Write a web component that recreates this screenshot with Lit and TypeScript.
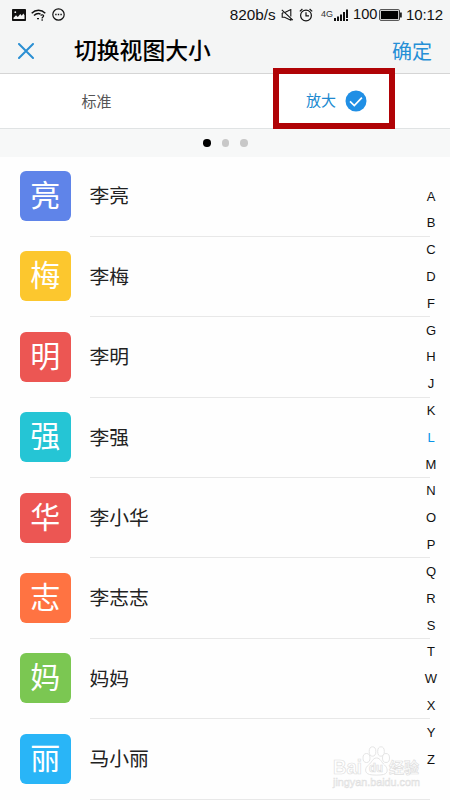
import { LitElement, html, css } from "lit";
import { customElement, property, state } from "lit/decorators.js";
import { classMap } from "lit/directives/class-map.js";

interface Contact {
  name: string;
  mark: string;
  color: string;
}

const CONTACTS: Contact[] = [
  { name: "李亮", mark: "亮", color: "#5f84e9" },
  { name: "李梅", mark: "梅", color: "#fcc72e" },
  { name: "李明", mark: "明", color: "#ec5653" },
  { name: "李强", mark: "强", color: "#25c5d5" },
  { name: "李小华", mark: "华", color: "#ec5653" },
  { name: "李志志", mark: "志", color: "#ff7342" },
  { name: "妈妈", mark: "妈", color: "#7bc752" },
  { name: "马小丽", mark: "丽", color: "#29b5f7" },
];

const LETTERS = "ABCDFGHJKLMNOPQRSTWXYZ".split("");

@customElement("status-bar")
class StatusBar extends LitElement {
  static styles = css`
    :host {
      display: flex;
      align-items: center;
      box-sizing: border-box;
      height: 29px;
      padding: 0 7px 0 12px;
      font: 15px/29px "Liberation Sans", Arial, sans-serif;
      color: #111;
    }
    svg { display: block; flex: none; }
    .wifi { margin-left: 5px; }
    .more { margin-left: 6px; }
    .rate { margin-left: auto; font-size: 15.3px; }
    .mute { margin-left: 5.5px; }
    .alarm { margin-left: 5px; }
    .net { margin-left: 8px; font-size: 9px; width: 12.5px; color: #333; }
    .level { margin-left: 0.5px; }
    .charge { margin-left: 5px; font-size: 14.6px; }
    .battery { margin-left: 2px; }
    .time { margin-left: 3.5px; letter-spacing: -0.1px; }
  `;
  render() {
    return html`
      <svg width="14" height="12" viewBox="0 0 14 12">
        <rect width="14" height="12" rx="0.8" fill="#111" />
        <path d="M1.5 10V8.800L4 6.300l1.800 1.600L8.300 5l1.500 1.800L11.300 4.500l1.200 1.800V10z" fill="#f4f5f5" />
        <circle cx="3.300" cy="3.200" r=".9" fill="#f4f5f5" />
      </svg>
      <svg class="wifi" width="15" height="12" viewBox="0 0 15 12" fill="none" stroke="#111" stroke-width="1.4">
        <path d="M.7 4.200C4.500 .3 10.500 .3 14.300 4.200M3 6.600C5 4.600 7.500 4.200 9.500 5" />
        <path d="M9.800 6.700c.3-1.300 3-1.200 2.800.3-.1 1.100-1.500 1.100-1.500 2.400" stroke-width="1.200" />
        <path d="M6 9.600h2M10.500 11h1.300" />
      </svg>
      <svg class="more" width="13" height="13" viewBox="0 0 13 13">
        <circle cx="6.500" cy="6.500" r="5.700" fill="none" stroke="#111" stroke-width="1.200" />
        <path d="M3.200 5.800h1.400v1.400H3.200zM5.800 5.800h1.400v1.400H5.800zM8.400 5.800h1.400v1.400H8.400z" fill="#111" />
      </svg>
      <span class="rate">820b/s</span>
      <svg class="mute" width="13" height="12" viewBox="0 0 13 12" fill="none" stroke="#111" stroke-width="1.100">
        <path d="M4.300 3.200L9.800 .6v6.900M1.200 3.900v4.300h2.400l6.200 3v-1.400M1.200 3.900h1.300M.8 .8l11 10.400" />
      </svg>
      <svg class="alarm" width="14" height="14" viewBox="0 0 14 14" fill="none" stroke="#111" stroke-width="1.200">
        <circle cx="7" cy="7.500" r="5.400" />
        <path d="M7 4.300v3.500h3M.8 3.400L3.400 1M13.200 3.400L10.600 1" />
      </svg>
      <span class="net">4G</span>
      <svg class="level" width="14" height="12" viewBox="0 0 14 12" fill="#111">
        <path d="M0 9h2v3H0zM3 7.500h2V12H3zM6 5.500h2V12H6zM9 3h2v9H9zM12 .5h2V9h-2zM12 10h2v2h-2z" />
      </svg>
      <span class="charge">100</span>
      <svg class="battery" width="23" height="12" viewBox="0 0 23 12">
        <rect x=".7" y=".7" width="19.800" height="10.600" rx="1" fill="none" stroke="#333" />
        <rect x="2" y="2" width="17.200" height="8" fill="#000" />
        <rect x="21" y="3.500" width="1.800" height="5" fill="#222" />
      </svg>
      <span class="time">10:12</span>
    `;
  }
}

@customElement("contact-row")
class ContactRow extends LitElement {
  @property({ attribute: false }) contact!: Contact;
  static styles = css`
    :host {
      display: flex;
      align-items: center;
      height: 80.4px;
      padding-left: 20px;
    }
    .mark {
      width: 50.5px;
      height: 50px;
      margin-bottom: 1px;
      border-radius: 6px;
      color: #fff;
      font-size: 30px;
      line-height: 45px;
      text-align: center;
      flex: none;
    }
    .name {
      flex: 1;
      height: 100%;
      box-sizing: border-box;
      margin: 0 20px 0 19px;
      border-bottom: 1px solid #e8e8e8;
      font-size: 19.8px;
      line-height: 78.5px;
      color: #222;
    }
  `;
  render() {
    return html`
      <div class="mark" style="background:${this.contact.color}">${this.contact.mark}</div>
      <div class="name">${this.contact.name}</div>
    `;
  }
}

@customElement("app-root")
class AppRoot extends LitElement {
  @state() private current = "L";

  static styles = css`
    :host {
      display: block;
      position: relative;
      width: 450px;
      height: 800px;
      overflow: hidden;
      background: #fefefe;
      font-family: "Noto Sans CJK SC", sans-serif;
    }
    .top {
      box-sizing: border-box;
      height: 74px;
      background: #f4f5f5;
      border-bottom: 1px solid #d5d5d5;
    }
    .bar {
      display: flex;
      align-items: center;
      height: 44px;
      padding: 0 18px;
    }
    .bar svg { display: block; }
    .title {
      flex: 1;
      margin-left: 40px;
      font-size: 22.8px;
      font-weight: 500;
      line-height: 42px;
      height: 44px;
      color: #000;
    }
    .ok { font-size: 20px; line-height: 44px; color: #258fd6; }
    .tabs {
      display: grid;
      grid-template-columns: 193px 1fr;
      box-sizing: border-box;
      height: 55px;
      background: #fff;
      border-bottom: 1px solid #e0e3e4;
      font-size: 15px;
      line-height: 53px;
    }
    .tab { text-align: center; color: #555; }
    .tab.on {
      display: flex;
      align-items: center;
      gap: 9px;
      padding-left: 113px;
      color: #2089d0;
    }
    .tab.on span { height: 54px; line-height: 52px; }
    .frame {
      position: absolute;
      left: 273px;
      top: 68px;
      width: 122px;
      height: 61px;
      box-sizing: border-box;
      border: 6px solid #b00306;
    }
    .dots {
      display: flex;
      align-items: center;
      justify-content: center;
      gap: 11px;
      height: 28px;
      padding-left: 1px;
      background: #f7f8f8;
    }
    .dot { width: 7.400px; height: 7.400px; border-radius: 50%; background: #c8c8c8; }
    .dot.on { background: #000; }
    .body { display: flex; height: 643px; }
    .list { flex: 1; margin-top: -0.6px; }
    .index {
      display: flex;
      flex-direction: column;
      width: 38px;
      margin-left: -38px;
      padding-top: 26.500px;
      font: 13px/26.820px "Liberation Sans", Arial, sans-serif;
      text-align: center;
      color: #111;
    }
    .index span { height: 26.820px; }
    .index .on { color: #0a93e8; }
    .watermark {
      position: absolute;
      left: 331px;
      top: 745px;
      width: 92px;
      height: 45px;
    }
    .watermark text {
      font-family: "Liberation Sans", "Noto Sans CJK SC", sans-serif;
      fill: #fff;
      stroke: #dedede;
      stroke-width: 0.700px;
    }
    .watermark .site { fill: #f6f6f6; stroke-width: 0.500px; }
  `;

  render() {
    return html`
      <div class="top">
        <status-bar></status-bar>
        <div class="bar">
          <svg width="16" height="16" viewBox="0 0 16 16" fill="none" stroke="#2b8fd3" stroke-width="2" stroke-linecap="round">
            <path d="M1 1l14 14M15 1L1 15" />
          </svg>
          <div class="title">切换视图大小</div>
          <div class="ok">确定</div>
        </div>
      </div>
      <div class="tabs">
        <div class="tab">标准</div>
        <div class="tab on">
          <span>放大</span>
          <svg width="22" height="22" viewBox="0 0 22 22">
            <circle cx="11" cy="11" r="10.500" fill="#208fe5" />
            <path d="M5 11.300l4.300 4.200 7.600-7.800" fill="none" stroke="#fff" stroke-width="1.700" />
          </svg>
        </div>
      </div>
      <div class="dots">
        <div class="dot on"></div>
        <div class="dot"></div>
        <div class="dot"></div>
      </div>
      <div class="body">
        <div class="list">
          ${CONTACTS.map((c) => html`<contact-row .contact=${c}></contact-row>`)}
        </div>
        <div class="index">
          ${LETTERS.map(
            (l) => html`<span class=${classMap({ on: l === this.current })} @click=${() => (this.current = l)}>${l}</span>`
          )}
        </div>
      </div>
      <div class="frame"></div>
      <svg class="watermark" viewBox="0 0 92 45">
        <text x="2" y="29" font-size="20" font-weight="700" textLength="29" lengthAdjust="spacingAndGlyphs">Bai</text>
        <g fill="#fff" stroke="#dedede" stroke-width="0.800">
          <ellipse cx="35.500" cy="13" rx="3.500" ry="4.500" />
          <ellipse cx="41.500" cy="6.500" rx="3.300" ry="4.700" />
          <ellipse cx="50" cy="6.500" rx="3.300" ry="4.700" />
          <ellipse cx="55" cy="13" rx="3.500" ry="4.500" />
          <path d="M45.500 13c4 0 5 4.500 8 7s4.500 8-1 9.500c-4 .8-10 .8-14 0-5.500-1.500-4.500-7-1-9.500s4-7 8-7z" />
        </g>
        <text x="38" y="27" font-size="12" font-weight="700" textLength="14" lengthAdjust="spacingAndGlyphs">du</text>
        <text x="58" y="28" font-size="15" font-weight="700" textLength="30" lengthAdjust="spacingAndGlyphs">经验</text>
        <text class="site" x="2" y="41" font-size="11" textLength="87" lengthAdjust="spacingAndGlyphs">jingyan.baidu.com</text>
      </svg>
    `;
  }
}
